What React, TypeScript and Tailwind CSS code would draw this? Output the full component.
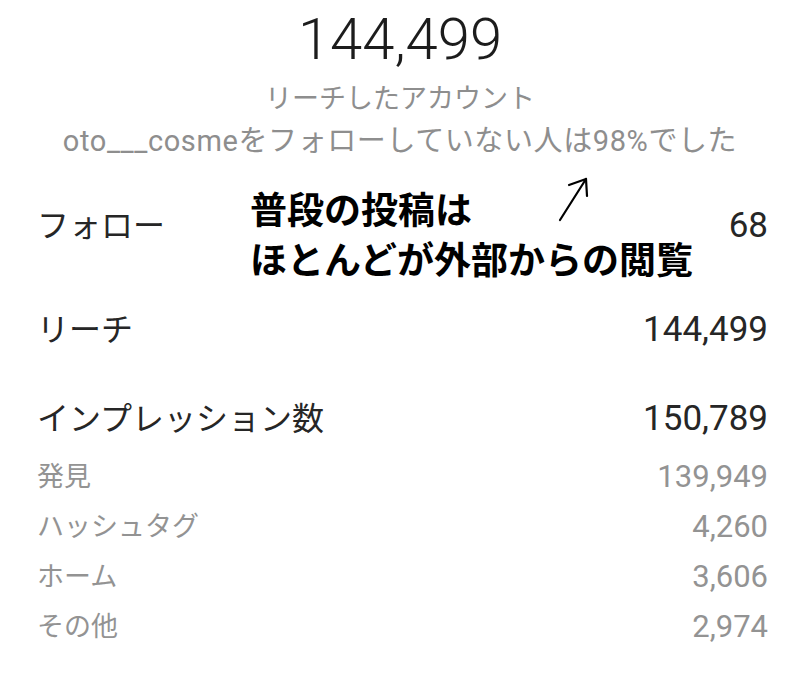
const sans = "font-['Roboto','Noto_Sans_CJK_JP',sans-serif]"

const sources = [
  { label: '発見', value: '139,949' },
  { label: 'ハッシュタグ', value: '4,260' },
  { label: 'ホーム', value: '3,606' },
  { label: 'その他', value: '2,974' },
]

function Row({ label, value, className = '' }: { label: string; value: string; className?: string }) {
  return (
    <div className={`flex items-center justify-between ${className}`}>
      <span className="text-[32px] text-[#262626]">{label}</span>
      <span className="text-[35px] text-[#262626]">{value}</span>
    </div>
  )
}

export default function App() {
  return (
    <div className={`relative h-[674px] w-[800px] overflow-hidden bg-white ${sans}`}>
      {/* header */}
      <div className="flex h-[76px] items-center justify-center pt-[2px]">
        <span className="text-[58px] font-light leading-none text-[#1c1c1c]">144,499</span>
      </div>
      <div className="flex h-[46px] items-center justify-center">
        <span className="text-[27px] text-[#8e8e8e]">リーチしたアカウント</span>
      </div>
      <div className="flex h-[40px] items-center justify-center">
        <span className="text-[29px] tracking-[0.6px] text-[#8e8e8e]">oto___cosmeをフォローしていない人は98%でした</span>
      </div>

      <div className="mt-[38px] pl-[37px] pr-[32px]">
        <Row label="フォロー" value="68" className="h-[52px]" />
        <Row label="リーチ" value="144,499" className="mt-[52px] h-[52px]" />
        <Row label="インプレッション数" value="150,789" className="mt-[37px] h-[52px]" />
        <div className="mt-[7px]">
          {sources.map((s) => (
            <div key={s.label} className="flex h-[50px] items-center justify-between text-[#939393]">
              <span className="text-[27px]">{s.label}</span>
              <span className="text-[31px]">{s.value}</span>
            </div>
          ))}
        </div>
      </div>

      {/* annotation laid over the stats */}
      <div className="absolute left-[250px] top-[187px] text-[37px] font-bold leading-[50px] text-black">
        <div>普段の投稿は</div>
        <div>ほとんどが外部からの閲覧</div>
      </div>
      <svg className="absolute left-[550px] top-[172px]" width="50" height="55" viewBox="0 0 50 55" fill="none">
        <path d="M10 48 L36 7" stroke="#000" strokeWidth="2.2" strokeLinecap="round" />
        <path d="M19 13 L36 7 L37 24" stroke="#000" strokeWidth="2.2" strokeLinecap="round" strokeLinejoin="round" />
      </svg>
    </div>
  )
}
